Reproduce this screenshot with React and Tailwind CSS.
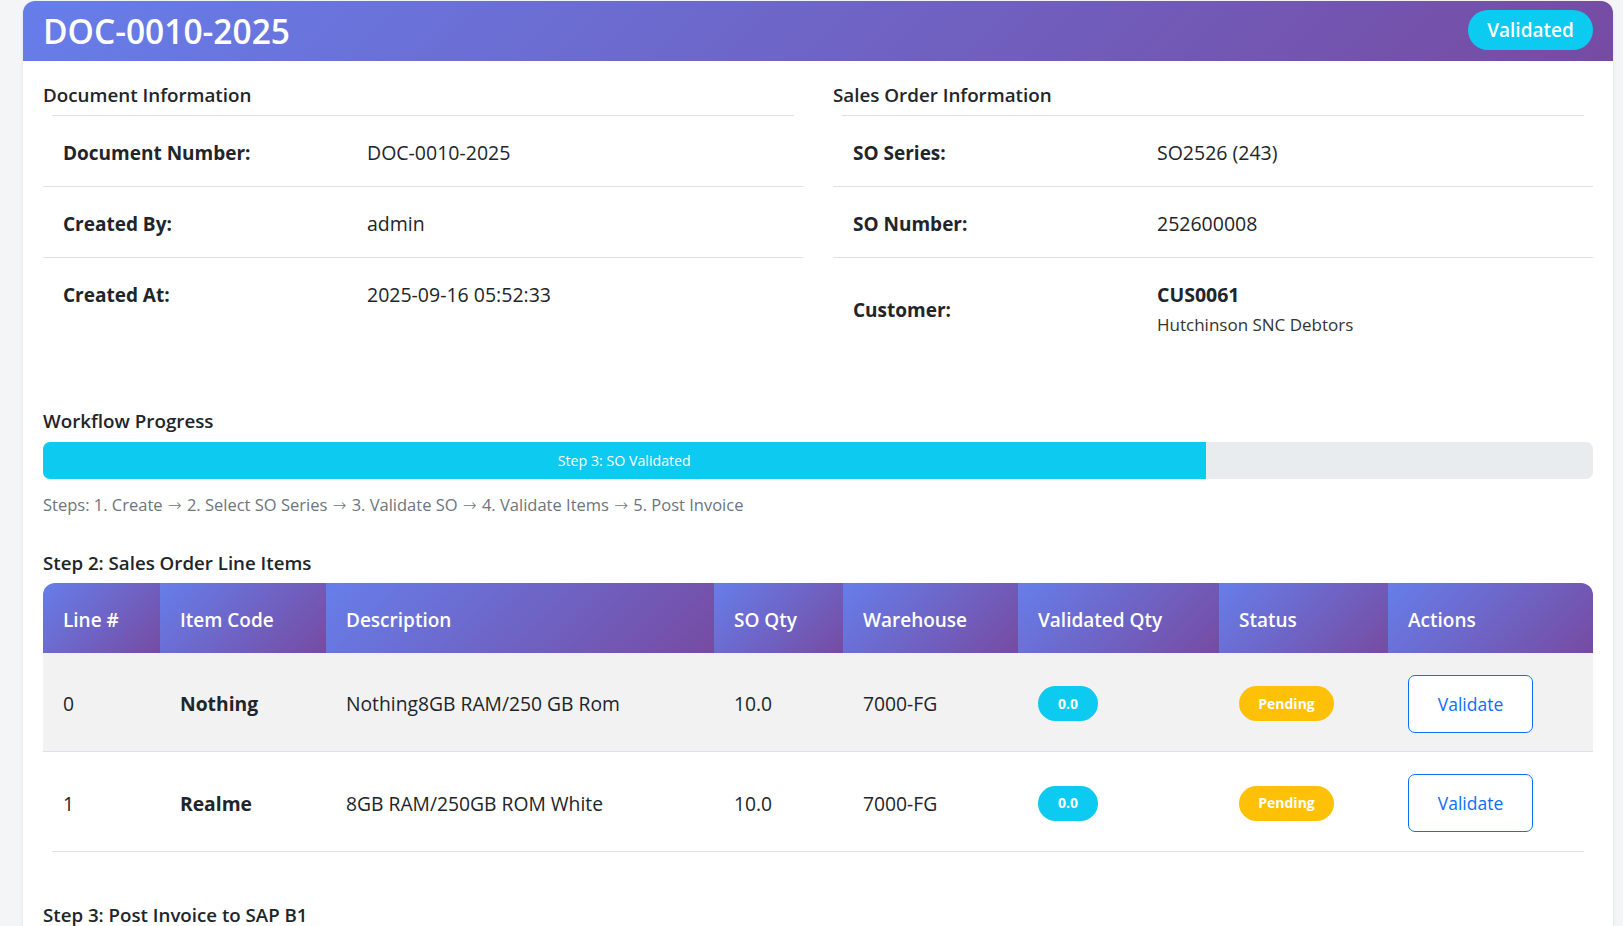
const COLS = [
  { key: 'line', label: 'Line #', w: 'w-[117px]' },
  { key: 'code', label: 'Item Code', w: 'w-[166px]' },
  { key: 'desc', label: 'Description', w: 'w-[388px]' },
  { key: 'qty', label: 'SO Qty', w: 'w-[129px]' },
  { key: 'wh', label: 'Warehouse', w: 'w-[175px]' },
  { key: 'vqty', label: 'Validated Qty', w: 'w-[201px]' },
  { key: 'status', label: 'Status', w: 'w-[169px]' },
  { key: 'actions', label: 'Actions', w: 'w-[205px]' },
];

const ITEMS = [
  { line: '0', code: 'Nothing', desc: 'Nothing8GB RAM/250 GB Rom', qty: '10.0', wh: '7000-FG', vqty: '0.0' },
  { line: '1', code: 'Realme', desc: '8GB RAM/250GB ROM White', qty: '10.0', wh: '7000-FG', vqty: '0.0' },
];

const STEPS = ['1. Create', '2. Select SO Series', '3. Validate SO', '4. Validate Items', '5. Post Invoice'];

const HEAD_BG = 'bg-[linear-gradient(135deg,#667eea_0%,#764ba2_100%)]';

function InfoTable({ title, rows }) {
  return (
    <div>
      <h5 className="text-[18.8px] leading-[24px] font-semibold mt-[2px] mb-[8px]">{title}</h5>
      <div className="mx-[9px] border-t border-[#dee2e6]" />
      {rows.map((r, i) => (
        <div
          key={r.label}
          className={`flex items-center pt-[22px] pb-[18px] ${i < rows.length - 1 ? 'border-b border-[#dee2e6]' : ''}`}
        >
          <div className="w-[40%] px-[20px] font-bold text-[19px]">{r.label}</div>
          <div className="flex-1 px-[20px] text-[19.5px]">{r.value}</div>
        </div>
      ))}
    </div>
  );
}

export default function App() {
  return (
    <div
      className="min-h-screen bg-[#f4f5f7] pl-[23px] pr-[10px] pt-[1px] text-[#212529] text-[20px] leading-[30px]"
      style={{ fontFamily: '"Open Sans", sans-serif' }}
    >
      <div className="bg-white rounded-t-[12px] shadow-sm">
        <div className={`${HEAD_BG} h-[60px] rounded-t-[12px] flex items-center justify-between px-[20px] text-white`}>
          <h2 className="text-[33.5px] leading-[40px] font-semibold">DOC-0010-2025</h2>
          <span className="h-[40px] w-[125px] rounded-full bg-[#0dcaf0] flex items-center justify-center text-[19px] font-semibold mt-[-3px]">
            Validated
          </span>
        </div>

        <div className="p-[20px]">
          <div className="grid grid-cols-2 gap-[30px]">
            <InfoTable
              title="Document Information"
              rows={[
                { label: 'Document Number:', value: 'DOC-0010-2025' },
                { label: 'Created By:', value: 'admin' },
                { label: 'Created At:', value: '2025-09-16 05:52:33' },
              ]}
            />
            <InfoTable
              title="Sales Order Information"
              rows={[
                { label: 'SO Series:', value: 'SO2526 (243)' },
                { label: 'SO Number:', value: '252600008' },
                {
                  label: 'Customer:',
                  value: (
                    <div>
                      <div className="font-bold">CUS0061</div>
                      <div className="text-[#333] text-[17px]">Hutchinson SNC Debtors</div>
                    </div>
                  ),
                },
              ]}
            />
          </div>

          <div className="mt-[50px]">
            <h6 className="text-[18.8px] leading-[24px] font-semibold pt-[1px] mb-[-1px]">Workflow Progress</h6>
            <div className="mt-[10px] h-[37px] rounded-[7px] bg-[#e9ecef] overflow-hidden flex">
              <div className="w-[75%] bg-[#0dcaf0] flex items-center justify-center text-white text-[14.2px]">
                Step 3: SO Validated
              </div>
            </div>
            <p className="mt-[11px] h-[30px] text-[#6c757d] text-[16.5px]">
              Steps:{' '}
              {STEPS.map((s, i) => (
                <span key={s}>
                  {i > 0 && <span className="font-['DejaVu_Sans'] text-[16.5px] font-light leading-none"> → </span>}
                  {s}
                </span>
              ))}
            </p>
          </div>

          <div className="mt-[30px]">
            <h5 className="text-[18.7px] leading-[24px] font-semibold pt-[1px] mb-[8px]">Step 2: Sales Order Line Items</h5>
            <div className="flex rounded-t-[12px] overflow-hidden">
              {COLS.map((c) => (
                <div key={c.key} className={`${c.w} ${HEAD_BG} h-[70px] px-[20px] pt-[3px] flex items-center text-white font-semibold text-[19px]`}>
                  {c.label}
                </div>
              ))}
            </div>
            {ITEMS.map((it, i) => (
              <div
                key={it.line}
                className={`flex items-center h-[99px] text-[19.3px] ${i === 0 ? 'bg-[#f2f2f2] border-b border-[#dee2e6]' : 'bg-white'}`}
              >
                <div className="w-[117px] px-[20px] pt-[4px]">{it.line}</div>
                <div className="w-[166px] px-[20px] pt-[4px] font-bold">{it.code}</div>
                <div className="w-[388px] px-[20px] pt-[4px]">{it.desc}</div>
                <div className="w-[129px] px-[20px] pt-[4px]">{it.qty}</div>
                <div className="w-[175px] px-[20px] pt-[4px]">{it.wh}</div>
                <div className="w-[201px] px-[20px] pt-[3px]">
                  <span className="w-[60px] h-[35px] rounded-full bg-[#0dcaf0] text-white text-[14px] font-bold flex items-center justify-center">
                    {it.vqty}
                  </span>
                </div>
                <div className="w-[169px] px-[20px] pt-[3px]">
                  <span className="w-[95px] h-[35px] rounded-full bg-[#ffc107] text-white text-[14px] font-bold flex items-center justify-center">
                    Pending
                  </span>
                </div>
                <div className="w-[205px] px-[20px] pt-[3px]">
                  <button className="w-[125px] h-[58px] rounded-[7px] border border-[#0d6efd] text-[#0d6efd] bg-white text-[17.5px]">
                    Validate
                  </button>
                </div>
              </div>
            ))}
            <div className="mx-[9px] border-t border-[#dee2e6]" />
          </div>

          <h5 className="mt-[51px] text-[18.7px] leading-[24px] font-semibold">Step 3: Post Invoice to SAP B1</h5>
          <div className="h-[200px]" />
        </div>
      </div>
    </div>
  );
}
